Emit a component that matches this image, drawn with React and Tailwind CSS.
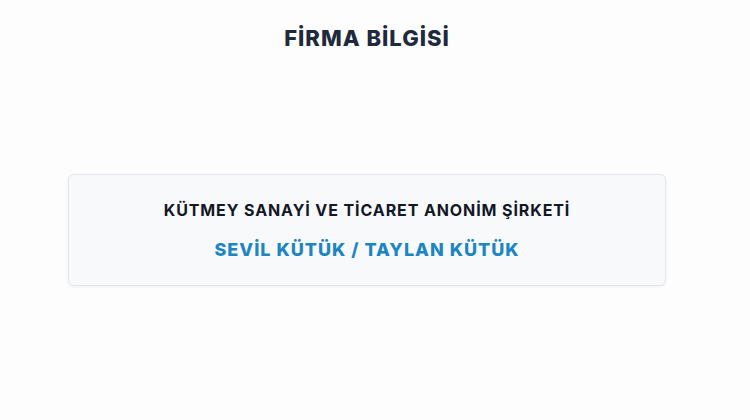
import React from "react";

function App() {
  return (
    <div
      className="min-h-[420px] w-full bg-[#fdfdfe] pr-[16px] flex flex-col items-center"
      style={{ fontFamily: "Inter, 'Noto Sans', sans-serif" }}
    >
      <h1 className="mt-[25px] text-[22px] leading-[26px] font-extrabold text-[#1f2a3c] tracking-[1px]">
        FİRMA BİLGİSİ
      </h1>

      <div className="mt-[123px] w-[598px] h-[112px] rounded-md border border-[#e3e6ea] bg-[#f8f9fb] shadow-[0_1px_3px_rgba(0,0,0,0.06)] flex flex-col items-center pt-[25px]">
        <p className="text-[16px] leading-[20px] font-bold text-[#121826] tracking-[0.9px]">
          KÜTMEY SANAYİ VE TİCARET ANONİM ŞİRKETİ
        </p>
        <p className="mt-[18px] text-[18px] leading-[24px] font-extrabold text-[#1d86c2] tracking-[1px]">
          SEVİL KÜTÜK / TAYLAN KÜTÜK
        </p>
      </div>
    </div>
  );
}

export default App;
